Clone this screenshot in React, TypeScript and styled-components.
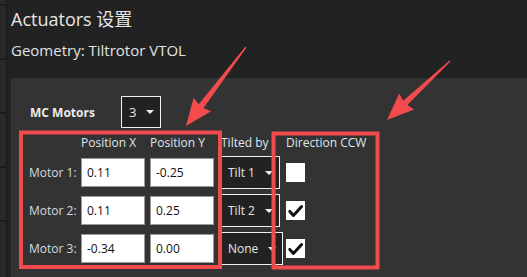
import styled, { createGlobalStyle } from "styled-components";

const GlobalStyle = createGlobalStyle`
  html, body {
    margin: 0;
    padding: 0;
    background: #222222;
  }
`;

interface Motor {
  name: string;
  x: string;
  y: string;
  tilt: string;
  ccw: boolean;
}

const motors: Motor[] = [
  { name: "Motor 1:", x: "0.11", y: "-0.25", tilt: "Tilt 1", ccw: false },
  { name: "Motor 2:", x: "0.11", y: "0.25", tilt: "Tilt 2", ccw: true },
  { name: "Motor 3:", x: "-0.34", y: "0.00", tilt: "None", ccw: true },
];

const sideBlocks = [4, 52, 52, 52, 52, 60];

// polygon for a tapered annotation arrow from tail to tip
function arrowPoints(tx: number, ty: number, px: number, py: number) {
  const dx = px - tx;
  const dy = py - ty;
  const len = Math.hypot(dx, dy);
  const ux = dx / len;
  const uy = dy / len;
  const nx = uy;
  const ny = -ux;
  const headLen = 25;
  const headHalf = 11;
  const shaftHalf = 3;
  const bx = px - ux * headLen;
  const by = py - uy * headLen;
  const pts = [
    [tx + nx * 0.6, ty + ny * 0.6],
    [bx + nx * shaftHalf, by + ny * shaftHalf],
    [bx + nx * headHalf - ux * 2, by + ny * headHalf - uy * 2],
    [px, py],
    [bx - nx * headHalf - ux * 2, by - ny * headHalf - uy * 2],
    [bx - nx * shaftHalf, by - ny * shaftHalf],
    [tx - nx * 0.6, ty - ny * 0.6],
  ];
  return pts.map((p) => p.map((v) => v.toFixed(1)).join(",")).join(" ");
}

function Dropdown({ label }: { label: string }) {
  return (
    <Select>
      <span>{label}</span>
      <Caret />
    </Select>
  );
}

function App() {
  return (
    <Page>
      <GlobalStyle />
      <Sidebar>
        {sideBlocks.map((h, i) => (
          <SideBlock key={i} $height={h} />
        ))}
      </Sidebar>
      <Divider />
      <Main>
        <Title>Actuators 设置</Title>
        <Subtitle>Geometry: Tiltrotor VTOL</Subtitle>
        <Panel>
          <MotorsRow>
            <MotorsLabel>MC Motors</MotorsLabel>
            <CountSelect>
              <span>3</span>
              <Caret />
            </CountSelect>
          </MotorsRow>
          <Table>
            <span />
            <Header>Position X</Header>
            <Header>Position Y</Header>
            <Header>Tilted by</Header>
            <Header>Direction CCW</Header>
            {motors.map((m) => (
              <Row key={m.name}>
                <RowLabel>{m.name}</RowLabel>
                <NumberInput value={m.x} readOnly />
                <NumberInput value={m.y} readOnly />
                <Dropdown label={m.tilt} />
                <Check>
                  {m.ccw && (
                    <svg width="19" height="19" viewBox="0 0 19 19">
                      <path
                        d="M3.8 10.4 L7.4 14.4 L15.6 5.6"
                        fill="none"
                        stroke="#111"
                        strokeWidth="3"
                        strokeLinecap="round"
                        strokeLinejoin="round"
                      />
                    </svg>
                  )}
                </Check>
              </Row>
            ))}
          </Table>
        </Panel>
      </Main>
      <Overlay width="527" height="277" viewBox="0 0 527 277">
        <rect x="21" y="132.5" width="199" height="134.5" fill="none" stroke="#f24b4e" strokeWidth="4" />
        <rect x="273.5" y="133.5" width="104" height="134" fill="none" stroke="#f24b4e" strokeWidth="4" />
        <polygon points={arrowPoints(246, 47, 186, 126)} fill="#f24b4e" />
        <polygon points={arrowPoints(450, 61, 387, 120)} fill="#f24b4e" />
      </Overlay>
    </Page>
  );
}
export default App;

const Page = styled.div`
  position: relative;
  display: flex;
  width: 527px;
  height: 277px;
  overflow: hidden;
  background: #222222;
  font-family: "Open Sans", "Noto Sans CJK SC", sans-serif;
`;

const Sidebar = styled.div`
  display: flex;
  flex-direction: column;
  gap: 2px;
  width: 6px;
  background: #1c1c1c;
`;

const SideBlock = styled.div<{ $height: number }>`
  flex: none;
  height: ${(p) => p.$height}px;
  background: #2a2a2a;
`;

const Divider = styled.div`
  width: 1px;
  background: #1a1a1a;
`;

const Main = styled.div`
  flex: 1;
  display: flex;
  flex-direction: column;
  padding-left: 4px;
  min-width: 0;
`;

const Title = styled.div`
  padding-top: 7px;
  font-size: 18px;
  line-height: 24px;
  color: #e6e6e6;
`;

const Subtitle = styled.div`
  margin-top: 9px;
  font-size: 15px;
  line-height: 20px;
  color: #e2e2e2;
`;

const Panel = styled.div`
  flex: 1;
  margin-top: 18px;
  padding: 18px 0 0 18px;
  background: #333333;
`;

const MotorsRow = styled.div`
  display: flex;
  align-items: center;
  height: 32px;
`;

const MotorsLabel = styled.div`
  width: 92px;
  padding-left: 1px;
  box-sizing: border-box;
  font-size: 12px;
  font-weight: 700;
  color: #ececec;
`;

const CountSelect = styled.div`
  display: flex;
  align-items: center;
  gap: 10px;
  box-sizing: border-box;
  width: 40px;
  height: 32px;
  padding-left: 7px;
  background: #222222;
  border: 1px solid #f2f2f2;
  font-size: 13px;
  color: #e8e8e8;
`;

const Table = styled.div`
  display: grid;
  grid-template-columns: 52px 69px 71px 65px auto;
  grid-template-rows: 18px repeat(3, 33px);
  row-gap: 5px;
  align-items: center;
  margin-top: 5px;
`;

const Row = styled.div`
  display: contents;
`;

const Header = styled.div`
  font-size: 12px;
  color: #dfe6ec;
  white-space: nowrap;
`;

const RowLabel = styled.div`
  font-size: 12px;
  color: #d3dbe2;
  white-space: nowrap;
`;

const NumberInput = styled.input`
  box-sizing: border-box;
  width: 64px;
  height: 29px;
  padding: 0 5px;
  border: 1px solid #9a9a9a;
  background: #ffffff;
  font-family: "Open Sans", sans-serif;
  font-size: 12px;
  color: #111111;
  outline: none;
`;

const Select = styled.div`
  justify-self: start;
  display: inline-flex;
  align-items: center;
  gap: 10px;
  box-sizing: border-box;
  height: 33px;
  padding: 0 6px 0 6px;
  background: #222222;
  border: 1px solid #f0f0f0;
  font-size: 12px;
  color: #e6e6e6;
  white-space: nowrap;
`;

const Caret = styled.span`
  width: 0;
  height: 0;
  border-left: 4px solid transparent;
  border-right: 4px solid transparent;
  border-top: 4px solid #f0f0f0;
`;

const Check = styled.div`
  width: 19px;
  height: 19px;
  background: #ffffff;
  & svg {
    display: block;
  }
`;

const Overlay = styled.svg`
  position: absolute;
  left: 0;
  top: 0;
  pointer-events: none;
`;
